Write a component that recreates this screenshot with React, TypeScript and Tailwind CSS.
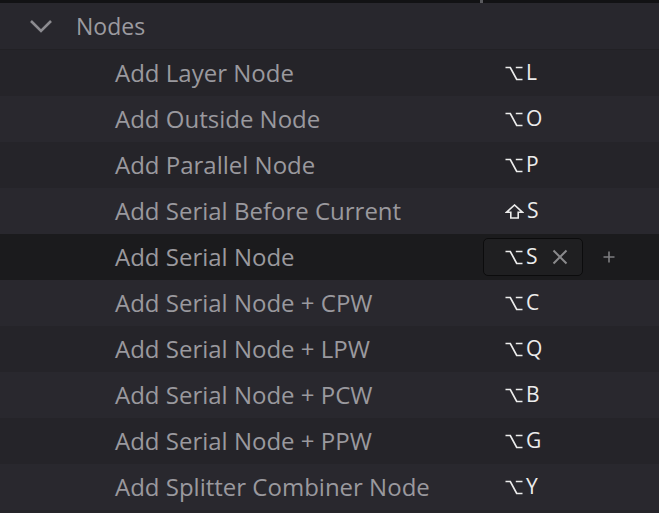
import React from 'react';

type Shortcut = { mod: 'opt' | 'shift'; key: string };

type Row = { label: string; shortcut: Shortcut; selected?: boolean };

const rows: Row[] = [
  { label: 'Add Layer Node', shortcut: { mod: 'opt', key: 'L' } },
  { label: 'Add Outside Node', shortcut: { mod: 'opt', key: 'O' } },
  { label: 'Add Parallel Node', shortcut: { mod: 'opt', key: 'P' } },
  { label: 'Add Serial Before Current', shortcut: { mod: 'shift', key: 'S' } },
  { label: 'Add Serial Node', shortcut: { mod: 'opt', key: 'S' }, selected: true },
  { label: 'Add Serial Node + CPW', shortcut: { mod: 'opt', key: 'C' } },
  { label: 'Add Serial Node + LPW', shortcut: { mod: 'opt', key: 'Q' } },
  { label: 'Add Serial Node + PCW', shortcut: { mod: 'opt', key: 'B' } },
  { label: 'Add Serial Node + PPW', shortcut: { mod: 'opt', key: 'G' } },
  { label: 'Add Splitter Combiner Node', shortcut: { mod: 'opt', key: 'Y' } },
];

function OptionGlyph() {
  return (
    <svg width="18" height="15" viewBox="0 0 18 15" fill="none" className="shrink-0">
      <path d="M0.5 1.5H5.3L11.7 13.5H17.5M10.8 1.5H17.5" stroke="#ececec" strokeWidth="1.7" />
    </svg>
  );
}

function ShiftGlyph() {
  return (
    <svg width="19" height="15" viewBox="0 0 19 15" fill="none" className="shrink-0">
      <path
        d="M9.5 1L1.5 8.3H5.8V14H13.2V8.3H17.5Z"
        stroke="#ececec"
        strokeWidth="1.6"
        strokeLinejoin="miter"
      />
    </svg>
  );
}

function Keys({ shortcut }: { shortcut: Shortcut }) {
  return (
    <span className="flex items-center gap-[3px] text-[21px] leading-normal text-[#ececec]">
      {shortcut.mod === 'opt' ? <OptionGlyph /> : <ShiftGlyph />}
      <span>{shortcut.key}</span>
    </span>
  );
}

export default function App() {
  return (
    <main
      className="flex h-[513px] w-[659px] flex-col overflow-hidden bg-[#252429]"
      style={{ fontFamily: '"Open Sans", "Noto Sans", sans-serif' }}
    >
      <div className="flex h-[3px] shrink-0 bg-[#121214]">
        <div className="w-[480px]" />
        <div className="w-[3px] bg-[#5a5a5e]" />
      </div>

      <div className="flex h-[47px] shrink-0 items-center border-b border-[#222125] bg-[#28272d]">
        <svg width="24" height="14" viewBox="0 0 24 14" fill="none" className="ml-[29px]">
          <path d="M2 2L12 12L22 2" stroke="#8c8b90" strokeWidth="2.6" />
        </svg>
        <span className="ml-[23px] text-[23px] leading-normal text-[#9c9ba0]">Nodes</span>
      </div>

      {rows.map((row, i) => (
        <div
          key={row.label}
          className={`flex h-[46px] shrink-0 items-center ${
            row.selected ? 'bg-[#1b1b1d]' : i % 2 === 1 ? 'bg-[#29282e]' : 'bg-[#252429]'
          }`}
        >
          <span className="ml-[115px] w-[368px] whitespace-nowrap text-[24px] leading-normal text-[#9a999e]">
            {row.label}
          </span>
          {row.selected ? (
            <div className="flex items-center">
              <div className="flex h-[38px] w-[100px] items-center rounded-[5px] border border-[#0c0c0d] bg-[#1f1f21] pl-[21px]">
                <Keys shortcut={row.shortcut} />
                <svg width="16" height="16" viewBox="0 0 16 16" className="ml-[14px]">
                  <path d="M1.5 1.5L14.5 14.5M14.5 1.5L1.5 14.5" stroke="#8a8a8c" strokeWidth="2" />
                </svg>
              </div>
              <svg width="12" height="12" viewBox="0 0 12 12" className="ml-[20px]">
                <path d="M6 0.5V11.5M0.5 6H11.5" stroke="#7d7d80" strokeWidth="1.6" />
              </svg>
            </div>
          ) : (
            <div className="ml-[22px]">
              <Keys shortcut={row.shortcut} />
            </div>
          )}
        </div>
      ))}
    </main>
  );
}
